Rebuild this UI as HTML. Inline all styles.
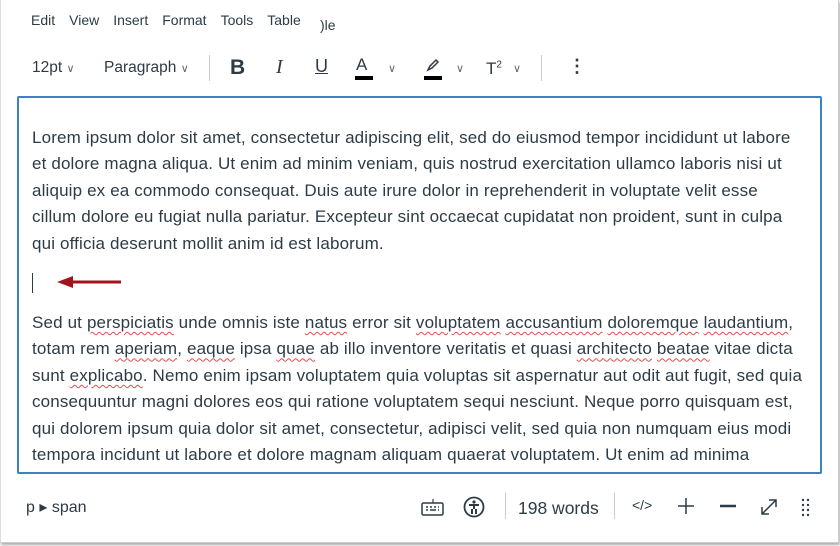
<!DOCTYPE html>
<html><head><style>
body{margin:0;width:840px;height:546px;background:#fff;font-family:"Liberation Sans",sans-serif;color:#2d3b45;position:relative;overflow:hidden}
.frame{position:absolute;left:0;top:0;width:837px;height:542px;border:1px solid #ccc;border-top:none;border-left:1px solid #ddd;box-shadow:1px 2px 3px rgba(0,0,0,.35)}
.menu{position:absolute;top:12px;left:31px;font-size:14px;color:#2d3b45}
.menu span{margin-right:14px}
.tb{position:absolute;top:59px;font-size:15.5px}
.sep{position:absolute;width:1px;background:#c7cdd1}
.ed{position:absolute;left:17px;top:96px;width:801px;height:374px;border:2px solid #3c82c8;border-radius:2px;overflow:hidden}
.ed p{margin:0;position:absolute;left:13px;width:790px;font-size:17px;line-height:26.4px;color:#2d3b45;letter-spacing:0.15px;white-space:nowrap}
u{text-decoration:underline wavy #e05050;text-decoration-thickness:1px;text-underline-offset:3px}
.ft{position:absolute;font-size:16px}
</style></head><body>
<div class="frame"></div>
<div class="menu"><span>Edit</span><span>View</span><span>Insert</span><span>Format</span><span>Tools</span><span>Table</span></div>
<div style="position:absolute;left:320px;top:17px;font-size:14px">)le</div>
<div class="tb" style="left:32px">12pt <span style="font-size:11px;color:#666">&#8744;</span></div>
<div class="tb" style="left:104px">Paragraph <span style="font-size:11px;color:#666">&#8744;</span></div>
<div class="sep" style="left:209px;top:55px;height:26px"></div>
<div class="tb" style="left:230px;top:56px;font-size:21px;font-weight:bold">B</div>
<div class="tb" style="left:276px;top:56px;font-size:20px;font-style:italic;font-family:'Liberation Serif',serif">I</div>
<div class="tb" style="left:315px;top:56px;font-size:18px;text-decoration:underline">U</div>
<div class="tb" style="left:356px;top:55px;font-size:17px">A</div>
<div style="position:absolute;left:355px;top:76px;width:18px;height:4px;background:#000"></div>
<div class="tb" style="left:388px;font-size:11px;color:#666;top:62px">&#8744;</div>
<svg style="position:absolute;left:424px;top:58px" width="20" height="16"><path d="M4 12 L6 8 L12 2 L14 4 L8 10 Z" fill="none" stroke="#2d3b45" stroke-width="1.5"/></svg>
<div style="position:absolute;left:424px;top:76px;width:18px;height:4px;background:#000"></div>
<div class="tb" style="left:456px;font-size:11px;color:#666;top:62px">&#8744;</div>
<div class="tb" style="left:486px;font-size:17px">T<sup style="font-size:10px">2</sup></div>
<div class="tb" style="left:513px;font-size:11px;color:#666;top:62px">&#8744;</div>
<div class="sep" style="left:541px;top:55px;height:26px"></div>
<div class="tb" style="left:568px;top:56px;font-size:18px;font-weight:bold">&#8942;</div>
<div class="ed">
<p style="top:27px">Lorem ipsum dolor sit amet, consectetur adipiscing elit, sed do eiusmod tempor incididunt ut labore<br>et dolore magna aliqua. Ut enim ad minim veniam, quis nostrud exercitation ullamco laboris nisi ut<br>aliquip ex ea commodo consequat. Duis aute irure dolor in reprehenderit in voluptate velit esse<br>cillum dolore eu fugiat nulla pariatur. Excepteur sint occaecat cupidatat non proident, sunt in culpa<br>qui officia deserunt mollit anim id est laborum.</p>
<div style="position:absolute;left:13px;top:175px;width:1px;height:20px;background:#2d3b45"></div>
<svg style="position:absolute;left:38px;top:177px" width="66" height="14"><path d="M14 7 H64" stroke="#a0141e" stroke-width="3"/><path d="M0 7 L16 1 L16 13 Z" fill="#a0141e"/></svg>
<p style="top:212px">Sed ut <u>perspiciatis</u> unde omnis iste <u>natus</u> error sit <u>voluptatem</u> <u>accusantium</u> <u>doloremque</u> <u>laudantium</u>,<br>totam rem <u>aperiam</u>, <u>eaque</u> ipsa <u>quae</u> ab illo inventore veritatis et quasi <u>architecto</u> <u>beatae</u> vitae dicta<br>sunt <u>explicabo</u>. Nemo enim ipsam voluptatem quia voluptas sit aspernatur aut odit aut fugit, sed quia<br>consequuntur magni dolores eos qui ratione voluptatem sequi nesciunt. Neque porro quisquam est,<br>qui dolorem ipsum quia dolor sit amet, consectetur, adipisci velit, sed quia non numquam eius modi<br>tempora incidunt ut labore et dolore magnam aliquam quaerat voluptatem. Ut enim ad minima</p>
</div>
<div class="ft" style="left:26px;top:497px">p &#9656; span</div>
<svg style="position:absolute;left:421px;top:497px" width="24" height="20"><rect x="1" y="6" width="21" height="12" rx="1.5" fill="none" stroke="#2d3b45" stroke-width="1.5"/><path d="M12 6 V2" stroke="#2d3b45" stroke-width="1.2"/><path d="M5 10h2M9 10h2M13 10h2M17 10h1M5 13h2M9 13h6M17 13h1" stroke="#2d3b45" stroke-width="1.5"/></svg>
<svg style="position:absolute;left:463px;top:496px" width="22" height="22"><circle cx="11" cy="11" r="9.5" fill="none" stroke="#2d3b45" stroke-width="1.8"/><circle cx="11" cy="6" r="1.6" fill="#2d3b45"/><path d="M6 9h10M11 9v4M9 13v5M13 13v5" stroke="#2d3b45" stroke-width="2"/></svg>
<div class="sep" style="left:505px;top:493px;height:26px"></div>
<div class="ft" style="left:518px;top:498px;font-size:17.5px">198 words</div>
<div class="sep" style="left:614px;top:493px;height:26px"></div>
<div class="ft" style="left:632px;top:497px;font-size:14px">&lt;/&gt;</div>
<svg style="position:absolute;left:677px;top:497px" width="18" height="18"><path d="M9 1v16M1 9h16" stroke="#2d3b45" stroke-width="1.5"/></svg>
<svg style="position:absolute;left:719px;top:497px" width="18" height="18"><path d="M1 9h16" stroke="#2d3b45" stroke-width="2.5"/></svg>
<svg style="position:absolute;left:760px;top:498px" width="18" height="18"><path d="M2 16L16 2M9 2h7v7M2 9v7h7" fill="none" stroke="#2d3b45" stroke-width="1.5"/></svg>
<svg style="position:absolute;left:801px;top:498px" width="10" height="20"><g fill="#2d3b45"><circle cx="2" cy="2" r="1.2"/><circle cx="7" cy="2" r="1.2"/><circle cx="2" cy="7" r="1.2"/><circle cx="7" cy="7" r="1.2"/><circle cx="2" cy="12" r="1.2"/><circle cx="7" cy="12" r="1.2"/><circle cx="2" cy="17" r="1.2"/><circle cx="7" cy="17" r="1.2"/></g></svg>
</body></html>
